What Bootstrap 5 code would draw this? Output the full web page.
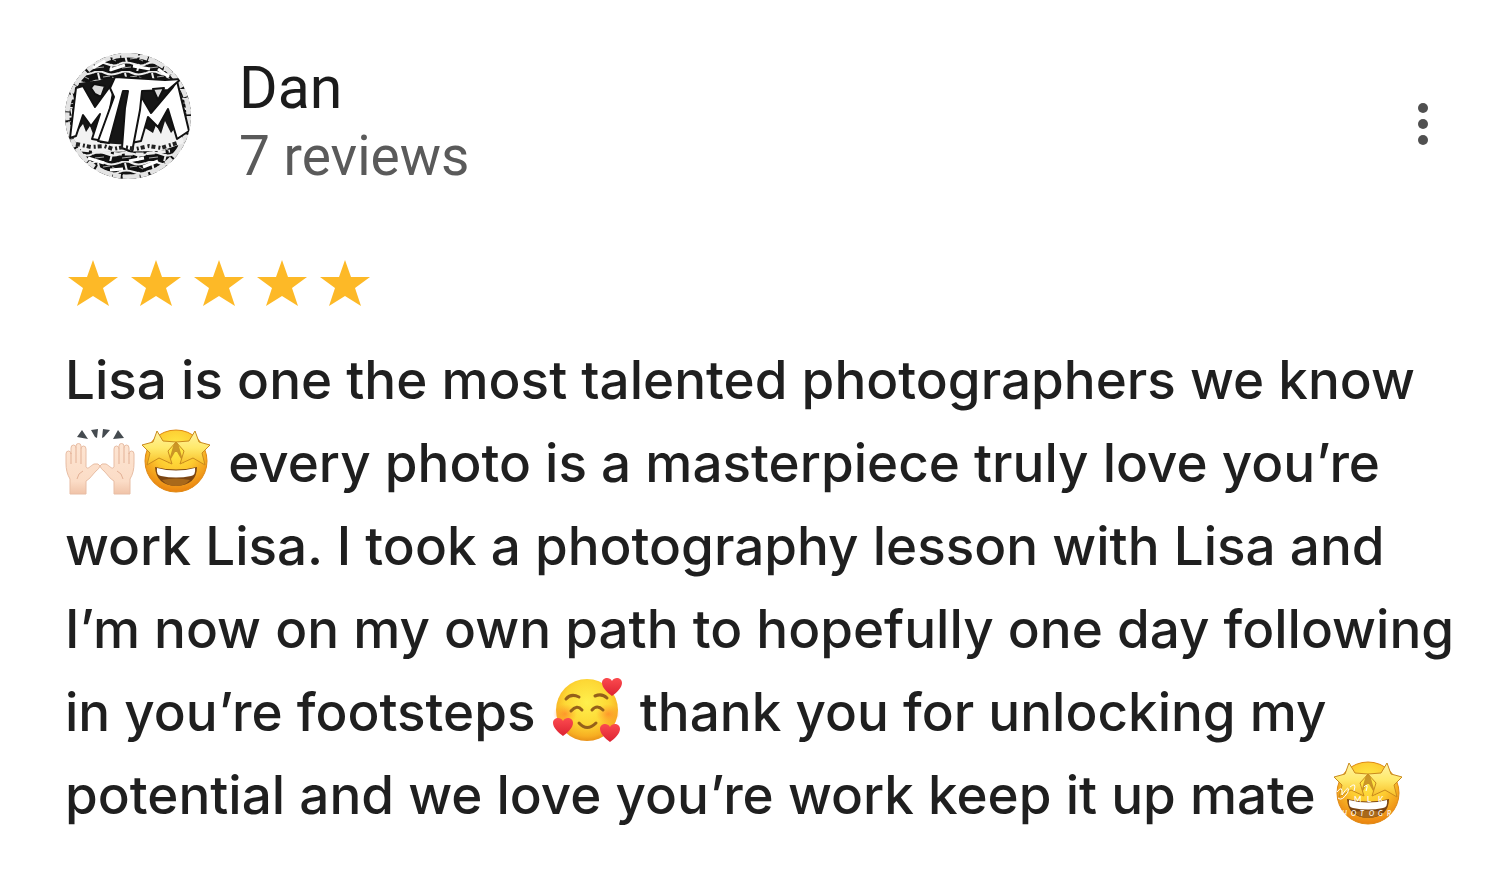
<!DOCTYPE html>
<html lang="en">
<head>
<meta charset="utf-8">
<meta name="viewport" content="width=device-width, initial-scale=1">
<title>Review by Dan</title>
<link href="https://cdn.jsdelivr.net/npm/bootstrap@5.3.0/dist/css/bootstrap.min.css" rel="stylesheet">
<style>
  body { background: #fff; color: #1f1f1f; font-family: Inter, "Liberation Sans", sans-serif; }
  .review { padding: 53px 24px 40px 65px; }
  .review-head { gap: 48px; font-family: Roboto, "Liberation Sans", sans-serif; }
  .avatar { width: 126px; height: 126px; }
  .author { font-size: 59px; line-height: 69px; color: #1b1b1b; }
  .count { font-size: 55px; line-height: 68px; color: #5a5a5a; }
  .more { width: 48px; height: 64px; margin-right: 29px; color: #505050; }
  .stars { gap: 13px; margin-top: 70px; padding-left: 3px; }
  .stars svg { width: 50px; height: 46px; }
  .review-text { font-size: 53px; font-weight: 500; line-height: 83px; margin-top: 33px; }
  .emoji { width: 70px; height: 70px; margin: 0 3px; vertical-align: -14px; }
  .emoji-lead { margin-left: 0; }
</style>
</head>
<body>
<svg width="0" height="0" class="position-absolute" aria-hidden="true">
  <defs>
    <radialGradient id="face" cx=".5" cy=".38" r=".64">
      <stop offset="0" stop-color="#fff04d"/><stop offset=".55" stop-color="#fdd835"/><stop offset=".85" stop-color="#f7ae22"/><stop offset="1" stop-color="#e58a17"/>
    </radialGradient>
    <radialGradient id="starface" cx=".5" cy=".3" r=".7">
      <stop offset="0" stop-color="#ffee4a"/><stop offset=".5" stop-color="#fdc92f"/><stop offset="1" stop-color="#ea820f"/>
    </radialGradient>
    <linearGradient id="eye" x1="0" y1="0" x2="0" y2="1">
      <stop offset="0" stop-color="#fff3a6"/><stop offset=".5" stop-color="#ffe96a"/><stop offset="1" stop-color="#f8bd22"/>
    </linearGradient>
    <radialGradient id="blush"><stop offset="0" stop-color="#ff7a28" stop-opacity=".65"/><stop offset="1" stop-color="#ff8a28" stop-opacity="0"/></radialGradient>
    <linearGradient id="heart" x1="0" y1="0" x2="0" y2="1"><stop offset="0" stop-color="#fb4a4e"/><stop offset="1" stop-color="#dd2232"/></linearGradient>
    <linearGradient id="skin" x1="0" y1="0" x2="0" y2="1"><stop offset="0" stop-color="#fde5d3"/><stop offset=".75" stop-color="#fbdcc6"/><stop offset="1" stop-color="#f0c3a8"/></linearGradient>
    <symbol id="rate" viewBox="0 0 50 46">
      <path fill="#fdb927" d="M25 0L31 17L50 17L35 28L41 46L25 36L9 46L15 28L0 17L19 17Z"/>
    </symbol>
    <symbol id="heartshape" viewBox="0 0 20 20">
      <path fill="url(#heart)" d="M10 19C6 16 0 11 0 6C0 1 7-1 10 4C13-1 20 1 20 6C20 11 14 16 10 19Z"/>
    </symbol>
    <symbol id="hand" viewBox="0 0 36 52">
      <path fill="url(#skin)" stroke="#e8bda4" stroke-width="1" d="M5 51V36C2 31 1 26 1 20V11Q1 8 3.500 8T6 11V5Q6 2 8.500 2T11 5V3Q11 .5 13.500 .5T16 3V6Q16 3 18.500 3T21 6V24C23 27 25 23 29 21Q34 20 35 23Q34 26 31 28C27 32 25 36 21 38V51Z"/>
      <path fill="none" stroke="#e3b196" stroke-width="1" d="M6 10V21M11 5V20M16 6V21M18 28Q13 30 12 36"/>
    </symbol>
    <symbol id="hands" viewBox="0 0 70 70">
      <path fill="#454b50" d="M12 11L17 4L23 13ZM26 4L33 3L32 12L30 11ZM38 3L45 4L39 11L37 12ZM53 4L59 12L48 13Z"/>
      <use href="#hand" x="0" y="17" width="36" height="52"/>
      <use href="#hand" width="36" height="52" transform="translate(70 17) scale(-1 1)"/>
    </symbol>
    <symbol id="starstruck" viewBox="0 0 70 70">
      <circle cx="35" cy="35" r="31" fill="url(#starface)" stroke="#e08a14" stroke-width="1"/>
      <path fill="#7b4512" d="M14 41Q35 46 56 41Q56 59 35 60Q15 59 14 41Z"/>
      <path fill="#fff" d="M16 42Q35 47 54 42Q55 49 50 50Q35 53 20 50Q15 49 16 42Z"/>
      <path fill="#a9691a" d="M21 54Q35 51 49 54Q44 60 35 60Q26 60 21 54Z"/>
      <path fill="#a85f12" opacity=".6" d="M33 17L37 17L43 38L36 26L34 26L27 38Z"/>
      <g fill="url(#eye)" stroke="#c98a1e" stroke-width="1" stroke-linejoin="round">
        <path d="M16 5L22 15L35 16L27 25L31 38L18 32L6 39L9 27L1 19L12 16Z"/>
        <path d="M54 5L58 16L69 19L61 27L64 39L52 32L39 38L43 25L35 16L48 15Z"/>
      </g>
    </symbol>
    <symbol id="hearts" viewBox="0 0 70 70">
      <circle cx="34" cy="35" r="31" fill="url(#face)"/>
      <ellipse cx="12" cy="39" rx="12" ry="10" fill="url(#blush)"/><ellipse cx="55" cy="39" rx="12" ry="10" fill="url(#blush)"/>
      <g fill="none" stroke="#95601a" stroke-width="3" stroke-linecap="round">
        <path d="M13 24Q18 18 26 22M42 21Q49 18 54 23"/>
        <path d="M18 36Q24 29 29 35M39 35Q44 29 50 35"/>
        <path d="M26 48Q34 57 43 48"/>
      </g>
      <use href="#heartshape" x="49" y="2" width="20" height="20"/>
      <use href="#heartshape" x="0" y="42" width="20" height="20"/>
      <use href="#heartshape" x="47" y="48" width="20" height="20"/>
    </symbol>
  </defs>
</svg>

<main class="container-fluid review">
  <header class="d-flex align-items-start review-head">
    <svg class="avatar flex-shrink-0" viewBox="0 0 126 126" role="img" aria-label="MTM logo">
      <defs>
        <clipPath id="disc"><circle cx="63" cy="63" r="63"/></clipPath>
        <pattern id="bricks" width="27" height="18" patternUnits="userSpaceOnUse">
          <rect width="27" height="18" fill="#111"/>
          <path d="M0 2Q7-1 13 2T27 2M0 11Q7 8 15 11T27 11M6 2L8 10M20 11L18 19" fill="none" stroke="#eee" stroke-width="2"/>
          <path d="M11 6L18 5M3 15L12 14M20 6L24 8" stroke="#aaa" stroke-width="1"/>
        </pattern>
      </defs>
      <g clip-path="url(#disc)">
        <rect width="126" height="126" fill="url(#bricks)"/>
        <circle cx="63" cy="63" r="61" fill="none" stroke="#e4e4e4" stroke-width="5" stroke-dasharray="17 2 8 1"/>
        <path d="M14 30L50 25L112 28L118 76L96 96L30 96L10 76Z" fill="#161616"/>
        <path d="M8 84L14 76L18 71L21 79L25 73L28 81L31 76L35 90L66 92L76 84L80 75L88 80L91 72L96 81L100 68L106 80L114 70L119 90L96 98L36 99L14 96Z" fill="#f2f2f2"/>
        <g fill="#fff" stroke="#111" stroke-width="2" stroke-linejoin="round">
          <path d="M5 85L11 35L18 33L30 54L46 32L50 29L39 88L27 86L35 61L26 73L18 62L11 83Z"/>
          <path d="M66 90L73 38L86 60L108 34L112 28L124 78L112 86L103 56L93 74L83 64L76 88Z"/>
          <path d="M45 35L50 24L100 27L116 26L103 37L77 38L75 57L67 99L57 95L60 55L63 38L58 38L44 90L33 88L49 44Z"/>
          <path d="M29 31L40 33L36 44L30 41L26 35ZM88 36L99 35L93 47Z" fill="#ddd"/>
        </g>
        <path d="M11 91L26 94L39 93L48 96L59 94L71 96L84 93L96 95L112 90" fill="none" stroke="#222" stroke-width="4" stroke-dasharray="4 3 2 2"/>
        <path d="M16 97L35 99L53 101L78 101L105 98" fill="none" stroke="#eee" stroke-width="3" stroke-dasharray="8 3"/>
        <path d="M28 15L40 8M45 17L60 12M68 13L85 16M93 16L104 24M23 105L39 110M45 117L58 116M64 108L79 105M78 114L93 108" stroke="#fff" stroke-width="3"/>
      </g>
    </svg>
    <div class="flex-grow-1">
      <h1 class="author fw-normal mb-0">Dan</h1>
      <div class="count">7 reviews</div>
    </div>
    <button type="button" class="btn p-0 border-0 more align-self-center mt-1" aria-label="More options">
      <svg width="12" height="44" viewBox="0 0 12 44" fill="currentColor" aria-hidden="true"><circle cx="6" cy="6" r="5"/><circle cx="6" cy="22" r="5"/><circle cx="6" cy="38" r="5"/></svg>
    </button>
  </header>

  <div class="d-flex stars" role="img" aria-label="5 out of 5 stars">
    <svg><use href="#rate"/></svg><svg><use href="#rate"/></svg><svg><use href="#rate"/></svg><svg><use href="#rate"/></svg><svg><use href="#rate"/></svg>
  </div>

  <p class="review-text mb-0">Lisa is one the most talented photographers we know<br>
    <svg class="emoji emoji-lead" role="img" aria-label="raised hands"><use href="#hands"/></svg><svg class="emoji" role="img" aria-label="star-struck"><use href="#starstruck"/></svg> every photo is a masterpiece truly love you’re<br>
    work Lisa. I took a photography lesson with Lisa and<br>
    I’m now on my own path to hopefully one day following<br>
    in you’re footsteps <svg class="emoji" role="img" aria-label="smiling face with hearts"><use href="#hearts"/></svg> thank you for unlocking my<br>
    potential and we love you’re work keep it up mate <svg class="emoji" viewBox="0 0 70 70" role="img" aria-label="star-struck"><use href="#starstruck"/><g fill="none" stroke="#fff" stroke-width="1"><path d="M4 34Q10 26 9 37Q17 25 15 34Q9 44 5 40M17 29Q24 23 21 33M31 29Q36 24 33 33"/></g><g fill="#fff" font-family="Lato, sans-serif" font-size="8"><text x="21" y="44">M</text><text x="34" y="44">L</text><text x="45" y="44">K</text><g font-size="7" font-style="italic"><text x="9" y="58">H</text><text x="18" y="58">O</text><text x="27" y="58">T</text><text x="36" y="58">O</text><text x="45" y="58">G</text><text x="54" y="58">R</text></g></g></svg>
  </p>
</main>
<script src="https://cdn.jsdelivr.net/npm/bootstrap@5.3.0/dist/js/bootstrap.bundle.min.js"></script>
</body>
</html>
